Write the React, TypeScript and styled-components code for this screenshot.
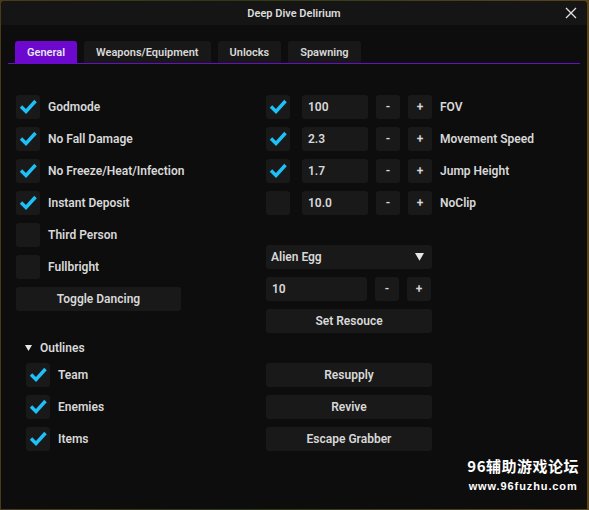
import React from 'react'
import styled, { createGlobalStyle } from 'styled-components'

const GlobalStyle = createGlobalStyle`
    html, body {
        margin: 0;
        padding: 0;
        width: 589px;
        height: 510px;
        overflow: hidden;
        background: linear-gradient(90deg, #4a3a1a 0%, #2d3a14 40%, #5a4418 100%);
        font-family: Roboto, "Noto Sans", "Liberation Sans", sans-serif;
    }
`

const Window = styled.div`
    position: relative;
    margin: 1px 2px 0 1px;
    width: 586px;
    height: 508px;
    background: #0d0d0d;
    border-radius: 4px 4px 0 0;
    overflow: hidden;
    color: #d8d8d8;
    font-size: 12px;
    font-weight: 600;
`

const TitleBar = styled.div`
    height: 24px;
    background: #151515;
    display: flex;
    align-items: center;
    justify-content: center;
    position: relative;
    font-size: 11px;
    color: #dcdcdc;
`

const CloseButton = styled.div`
    position: absolute;
    right: 10px;
    top: 6px;
    width: 12px;
    height: 12px;
`

const Body = styled.div`
    padding: 16px 7px 0 7px;
`

const TabBar = styled.div`
    display: flex;
    gap: 7px;
    padding-left: 7px;
    border-bottom: 1px solid #6a0dc8;
`

const Tab = styled.div<{ $active?: boolean }>`
    height: 22px;
    padding: 0 12px;
    display: flex;
    align-items: center;
    border-radius: 3px 3px 0 0;
    font-size: 11px;
    background: ${(p) => (p.$active ? '#6d08cf' : '#181818')};
    color: ${(p) => (p.$active ? '#e6e6f0' : '#d8d8d8')};
`

const Columns = styled.div`
    display: grid;
    grid-template-columns: 250px 1fr;
    padding: 31px 0 0 8px;
`

const Column = styled.div`
    display: flex;
    flex-direction: column;
    gap: 8px;
`

const Row = styled.div<{ $indent?: number }>`
    display: flex;
    align-items: center;
    gap: 8px;
    height: 24px;
    padding-left: ${(p) => p.$indent || 0}px;
`

const Box = styled.div`
    width: 24px;
    height: 24px;
    flex: none;
    border-radius: 3px;
    background: #191919;
    display: flex;
    align-items: center;
    justify-content: center;
`

const Input = styled.div<{ $w: number; $offset?: number }>`
    width: ${(p) => p.$w}px;
    height: 24px;
    flex: none;
    margin-left: ${(p) => p.$offset || 0}px;
    border-radius: 3px;
    background: #191919;
    display: flex;
    align-items: center;
    padding-left: 6px;
    box-sizing: border-box;
`

const StepButton = styled(Box)`
    font-size: 12px;
`

const Button = styled.div<{ $w: number }>`
    width: ${(p) => p.$w}px;
    height: 24px;
    border-radius: 3px;
    background: #191919;
    display: flex;
    align-items: center;
    justify-content: center;
`

const Select = styled.div`
    width: 166px;
    height: 24px;
    border-radius: 3px;
    background: #191919;
    display: flex;
    align-items: center;
    justify-content: space-between;
    padding: 0 8px 0 5px;
    box-sizing: border-box;
`

const TreeHeader = styled.div`
    display: flex;
    align-items: center;
    gap: 8px;
    height: 16px;
    padding-left: 9px;
    margin-top: 21px;
    margin-bottom: -1px;
`

const Spacer = styled.div<{ $h: number }>`
    height: ${(p) => p.$h}px;
`

const Watermark = styled.div`
    position: absolute;
    right: 8px;
    bottom: 16px;
    display: flex;
    flex-direction: column;
    align-items: center;
    color: #ffffff;
    font-family: "Noto Sans CJK SC", "Noto Sans", sans-serif;
    font-weight: 700;
`

const WmTitle = styled.div`
    font-size: 15px;
    letter-spacing: 0.5px;
    line-height: 18px;
`

const WmUrl = styled.div`
    font-family: "Liberation Sans", sans-serif;
    font-size: 11px;
    line-height: 14px;
    margin-top: 4px;
    letter-spacing: 0.9px;
`

const Check = () => (
    <svg width="24" height="24" viewBox="0 0 24 24">
        <polyline points="5,11.5 10,16.5 19.5,6" fill="none" stroke="#1ec0f8" strokeWidth="3.4" strokeLinecap="butt" strokeLinejoin="miter" />
    </svg>
)

const CheckBox = ({ checked }: { checked?: boolean }) => <Box>{checked && <Check />}</Box>

const Arrow = ({ size }: { size: number }) => (
    <svg width={size} height={size * 0.85} viewBox="0 0 10 8.5">
        <polygon points="0,0 10,0 5,8.5" fill="#e6e6e6" />
    </svg>
)

const leftToggles = [
    { label: 'Godmode', on: true },
    { label: 'No Fall Damage', on: true },
    { label: 'No Freeze/Heat/Infection', on: true },
    { label: 'Instant Deposit', on: true },
    { label: 'Third Person', on: false },
    { label: 'Fullbright', on: false },
]

const sliders = [
    { value: '100', label: 'FOV', on: true },
    { value: '2.3', label: 'Movement Speed', on: true },
    { value: '1.7', label: 'Jump Height', on: true },
    { value: '10.0', label: 'NoClip', on: false },
]

const outlines = ['Team', 'Enemies', 'Items']

export default function App() {
    return (
        <>
            <GlobalStyle />
            <Window>
                <TitleBar>
                    Deep Dive Delirium
                    <CloseButton>
                        <svg width="12" height="12" viewBox="0 0 12 12">
                            <path d="M1 1 L11 11 M11 1 L1 11" stroke="#e0e0e0" strokeWidth="1.3" />
                        </svg>
                    </CloseButton>
                </TitleBar>
                <Body>
                    <TabBar>
                        <Tab $active>General</Tab>
                        <Tab>Weapons/Equipment</Tab>
                        <Tab>Unlocks</Tab>
                        <Tab>Spawning</Tab>
                    </TabBar>
                    <Columns>
                        <Column>
                            {leftToggles.map((t) => (
                                <Row key={t.label}>
                                    <CheckBox checked={t.on} />
                                    {t.label}
                                </Row>
                            ))}
                            <Button $w={165}>Toggle Dancing</Button>
                            <TreeHeader>
                                <Arrow size={7} />
                                Outlines
                            </TreeHeader>
                            {outlines.map((o) => (
                                <Row key={o} $indent={10}>
                                    <CheckBox checked />
                                    {o}
                                </Row>
                            ))}
                        </Column>
                        <Column>
                            {sliders.map((s) => (
                                <Row key={s.label}>
                                    <CheckBox checked={s.on} />
                                    <Input $w={66} $offset={4}>{s.value}</Input>
                                    <StepButton>-</StepButton>
                                    <StepButton>+</StepButton>
                                    {s.label}
                                </Row>
                            ))}
                            <Spacer $h={14} />
                            <Select>
                                Alien Egg
                                <Arrow size={9} />
                            </Select>
                            <Row>
                                <Input $w={101}>10</Input>
                                <StepButton>-</StepButton>
                                <StepButton>+</StepButton>
                            </Row>
                            <Button $w={166}>Set Resouce</Button>
                            <Spacer $h={14} />
                            <Button $w={166}>Resupply</Button>
                            <Button $w={166}>Revive</Button>
                            <Button $w={166}>Escape Grabber</Button>
                        </Column>
                    </Columns>
                </Body>
                <Watermark>
                    <WmTitle>96辅助游戏论坛</WmTitle>
                    <WmUrl>www.96fuzhu.com</WmUrl>
                </Watermark>
            </Window>
        </>
    )
}
